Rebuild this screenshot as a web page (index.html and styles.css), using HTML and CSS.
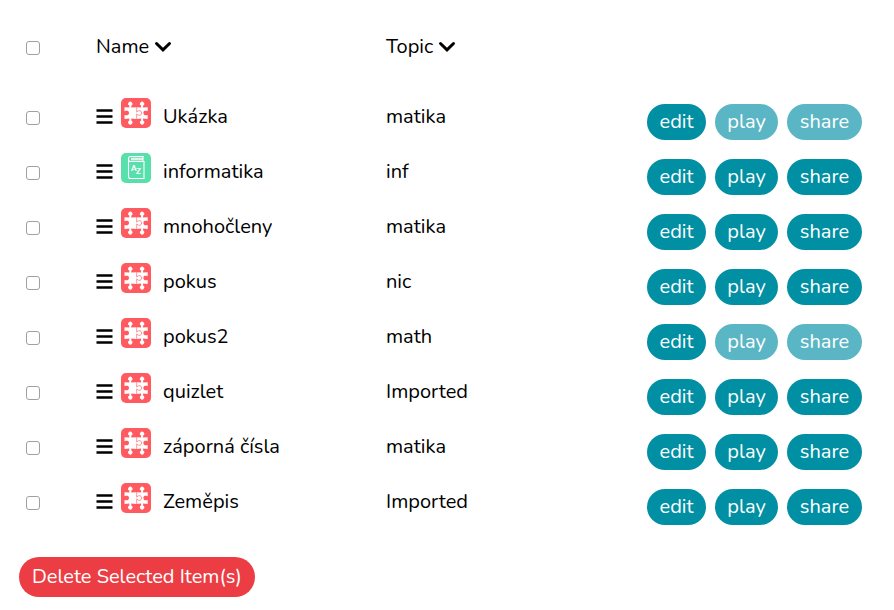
FILE: index.html
```
<!DOCTYPE html>
<html lang="en">
<head>
    <meta charset="UTF-8">
    <meta name="viewport" content="width=device-width, initial-scale=1.0">
    <title>My items</title>
    <link rel="stylesheet" href="styles.css">
</head>
<body>
    <form class="items">
        <table>
            <thead>
                <tr>
                    <th class="check"><input type="checkbox" aria-label="Select all"></th>
                    <th class="name">Name <svg class="chevron" viewBox="0 0 18 12"><path d="M2.5 2.5L9 8.8L15.5 2.5"/></svg></th>
                    <th class="topic">Topic <svg class="chevron" viewBox="0 0 18 12"><path d="M2.5 2.5L9 8.8L15.5 2.5"/></svg></th>
                    <th class="actions"></th>
                </tr>
            </thead>
            <tbody id="itemRows"></tbody>
        </table>
        <button type="button" class="delete">Delete Selected Item(s)</button>
    </form>

    <script src="script.js"></script>
</body>
</html>
```
FILE: styles.css
```
body {
    margin: 0;
    background-color: #fff;
    color: #000;
    font-family: Nunito, Lato, sans-serif;
    font-size: 20px;
    line-height: 24px;
}
.items {
    padding: 24px 32px 12px 19px;
}
table {
    width: 100%;
    table-layout: fixed;
    border-collapse: collapse;
}
th, td {
    height: 55px;
    padding: 11px 0 0;
    box-sizing: border-box;
    text-align: left;
    vertical-align: top;
    font-weight: normal;
}
th {
    height: 70px;
}
.check {
    width: 77px;
    padding: 17px 0 0 7px;
}
.name {
    width: 290px;
}
td.name {
    padding-top: 4px;
}
.actions {
    width: 216px;
    padding-top: 10px;
}
input[type="checkbox"] {
    appearance: none;
    display: block;
    width: 14px;
    height: 14px;
    margin: 0;
    border: 1px solid #a0a0a0;
    border-radius: 3px;
    background-color: #fff;
}
input[type="checkbox"]:checked {
    background-color: #008fa3;
}
.chevron {
    width: 18px;
    height: 12px;
    fill: none;
    stroke: #000;
    stroke-width: 3;
    stroke-linecap: round;
}
.item {
    display: flex;
    align-items: flex-start;
}
.item label {
    margin: 7px 0 0 12px;
}
.bars {
    width: 17px;
    height: 17px;
    margin: 10px 8px 0 0;
    stroke: #000;
    stroke-width: 2.7;
}
.type {
    width: 30px;
    height: 30px;
    border-radius: 5px;
}
.puzzle {
    background-color: #ff5a5f;
    fill: #fff;
}
.puzzle .tab {
    stroke: #ff5a5f;
    stroke-width: .7;
}
.book {
    background-color: #57dfac;
}
.book path {
    fill: none;
    stroke: #fff;
    stroke-width: 1.1;
}
.book text {
    fill: #fff;
    font-family: Lato, sans-serif;
    font-size: 8px;
    font-weight: bold;
}
.buttons {
    display: grid;
    grid-template-columns: 59px 63px 75px;
    justify-content: end;
    column-gap: 9px;
}
button {
    height: 36px;
    padding: 0;
    border: none;
    border-radius: 20px;
    background-color: #008fa3;
    color: #fff;
    font: inherit;
    cursor: pointer;
}
button:disabled {
    background-color: #5ab6c4;
    cursor: default;
}
.delete {
    display: block;
    height: 40px;
    margin-top: 23px;
    padding: 0 13px;
    background-color: #eb3d43;
}
```
FILE: script.js
```
const icons = {
    puzzle: `<svg class="type puzzle" viewBox="0 0 30 30">
        <path d="M3.5 9.2L8.3 9.6V7.6A2.1 2.1 0 1 1 10.3 7.6V9.6L15.5 9.2V21L10.3 20.6V22.6A2.1 2.1 0 1 1 8.3 22.6V20.6L3.5 21V17C5 17.4 8 17.8 8 15S5 12.8 3.5 13.2Z"/>
        <path d="M16.1 9.2L20.1 9.6V7.6A2.1 2.1 0 1 1 22.1 7.6V9.6L26.7 9.2V13.2C25 12.8 22.4 12.2 22.4 15S25 17.4 26.7 17V21L22.1 20.6V22.6A2.1 2.1 0 1 1 20.1 22.6V20.6L16.1 21Z"/>
        <path class="tab" d="M15.4 13.3H17C17.3 12.2 20.6 12.3 20.6 15S17.3 17.8 17 16.7H15.4"/>
    </svg>`,
    book: `<svg class="type book" viewBox="0 0 30 30">
        <path d="M23 3.5H9.5C6.8 3.5 6.8 8.5 9.5 8.5H23V25.5H9.5Q7.5 25.5 7.5 23.5V6M22 3.5V8.5M10 5.2H22M10 6.8H22"/>
        <text x="10" y="18">A</text>
        <text x="15" y="21">Z</text>
    </svg>`
};

const items = [
    { name: 'Ukázka', topic: 'matika', icon: 'puzzle', locked: true },
    { name: 'informatika', topic: 'inf', icon: 'book' },
    { name: 'mnohočleny', topic: 'matika', icon: 'puzzle' },
    { name: 'pokus', topic: 'nic', icon: 'puzzle' },
    { name: 'pokus2', topic: 'math', icon: 'puzzle', locked: true },
    { name: 'quizlet', topic: 'Imported', icon: 'puzzle' },
    { name: 'záporná čísla', topic: 'matika', icon: 'puzzle' },
    { name: 'Zeměpis', topic: 'Imported', icon: 'puzzle' }
];

// Items that are locked can only be edited
document.getElementById('itemRows').innerHTML = items.map((item, i) => {
    const disabled = item.locked ? 'disabled' : '';
    return `<tr>
        <td class="check"><input type="checkbox" id="item${i}"></td>
        <td class="name">
            <div class="item">
                <svg class="bars" viewBox="0 0 17 17"><path d="M0.5 2.5h16M0.5 8.5h16M0.5 14.5h16"/></svg>
                ${icons[item.icon]}
                <label for="item${i}">${item.name}</label>
            </div>
        </td>
        <td class="topic">${item.topic}</td>
        <td class="actions">
            <div class="buttons">
                <button type="button">edit</button>
                <button type="button" ${disabled}>play</button>
                <button type="button" ${disabled}>share</button>
            </div>
        </td>
    </tr>`;
}).join('');
```
